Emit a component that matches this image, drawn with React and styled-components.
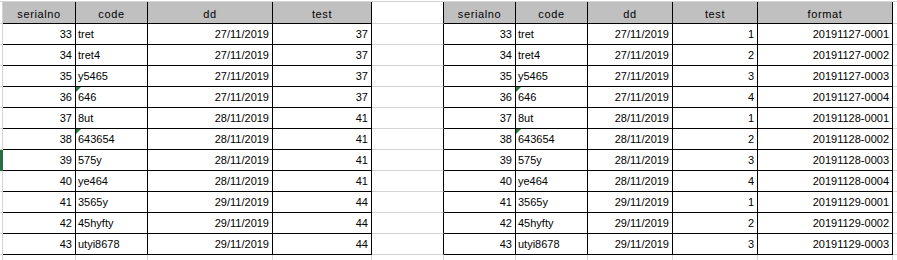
import styled, { createGlobalStyle } from "styled-components";

const GRID = "#d4d4d4";
const INK = "#000";
const COLS = "3px 73px 72px 125px 99px 72px 72px 72px 85px 85px 135px 1fr";

const rows = [
  ["33", "tret", "27/11/2019", "37", "1", "20191127-0001"],
  ["34", "tret4", "27/11/2019", "37", "2", "20191127-0002"],
  ["35", "y5465", "27/11/2019", "37", "3", "20191127-0003"],
  ["36", "646", "27/11/2019", "37", "4", "20191127-0004"],
  ["37", "8ut", "28/11/2019", "41", "1", "20191128-0001"],
  ["38", "643654", "28/11/2019", "41", "2", "20191128-0002"],
  ["39", "575y", "28/11/2019", "41", "3", "20191128-0003"],
  ["40", "ye464", "28/11/2019", "41", "4", "20191128-0004"],
  ["41", "3565y", "29/11/2019", "44", "1", "20191129-0001"],
  ["42", "45hyfty", "29/11/2019", "44", "2", "20191129-0002"],
  ["43", "utyi8678", "29/11/2019", "44", "3", "20191129-0003"],
];

const leftHead = ["serialno", "code", "dd", "test"];
const rightHead = ["serialno", "code", "dd", "test", "format"];

// codes that excel flags as "number stored as text"
const isNumericText = (s) => /^\d+$/.test(s);

export default function App() {
  return (
    <>
      <GlobalStyle />
      <Sheet>
        <Row $head>
          <Edge />
          {leftHead.map((h) => (
            <HeadCell key={"l" + h}>{h}</HeadCell>
          ))}
          <GapCell $ink />
          {rightHead.map((h) => (
            <HeadCell key={"r" + h}>{h}</HeadCell>
          ))}
          <Filler />
        </Row>
        {rows.map(([sn, code, dd, test, test2, format], i) => (
          <Row key={sn}>
            <Edge $selected={i === 6} />
            <DataCell $align="right">{sn}</DataCell>
            <DataCell $flag={isNumericText(code)}>{code}</DataCell>
            <DataCell $align="right">{dd}</DataCell>
            <DataCell $align="right">{test}</DataCell>
            <GapCell $ink />
            <DataCell $align="right">{sn}</DataCell>
            <DataCell $flag={isNumericText(code)}>{code}</DataCell>
            <DataCell $align="right">{dd}</DataCell>
            <DataCell $align="right">{test2}</DataCell>
            <DataCell $align="right">{format}</DataCell>
            <Filler />
          </Row>
        ))}
        <Row>
          <Edge />
          {Array.from({ length: 10 }).map((_, i) => (
            <GapCell key={i} />
          ))}
          <Filler />
        </Row>
      </Sheet>
    </>
  );
}

const GlobalStyle = createGlobalStyle`
  body {
    margin: 0;
    background: #fff;
    font-family: "Liberation Sans", Arial, sans-serif;
    color: #000;
  }
`;

const Sheet = styled.div`
  width: 897px;
  height: 259px;
  margin-top: 1px;
  border-top: 1px solid ${GRID};
  overflow: hidden;
`;

const Row = styled.div`
  display: grid;
  grid-template-columns: ${COLS};
  height: ${(p) => (p.$head ? 22 : 21)}px;
`;

const Edge = styled.div`
  box-sizing: border-box;
  background: ${(p) => (p.$selected ? "#217346" : "#fff")};
  border-right: 1px solid ${(p) => (p.$selected ? "#217346" : GRID)};
  border-bottom: 1px solid ${(p) => (p.$selected ? "#217346" : GRID)};
`;

const HeadCell = styled.div`
  box-sizing: border-box;
  background: #c0c0c0;
  border-right: 1px solid ${INK};
  border-bottom: 1px solid ${INK};
  font-size: 11px;
  letter-spacing: 0.6px;
  line-height: 24px;
  text-align: center;
  white-space: nowrap;
  overflow: hidden;
`;

const DataCell = styled.div`
  position: relative;
  box-sizing: border-box;
  border-right: 1px solid ${INK};
  border-bottom: 1px solid ${INK};
  padding: 0 3px 0 2px;
  font-size: 11px;
  line-height: 21px;
  text-align: ${(p) => p.$align || "left"};
  white-space: nowrap;
  overflow: hidden;

  &::before {
    content: "";
    display: ${(p) => (p.$flag ? "block" : "none")};
    position: absolute;
    top: 0;
    left: 0;
    border-top: 5px solid #1e7b3c;
    border-right: 5px solid transparent;
  }
`;

const GapCell = styled.div`
  box-sizing: border-box;
  border-right: 1px solid ${(p) => (p.$ink ? INK : GRID)};
  border-bottom: 1px solid ${GRID};
`;

const Filler = styled.div`
  box-sizing: border-box;
  border-bottom: 1px solid ${GRID};
`;
